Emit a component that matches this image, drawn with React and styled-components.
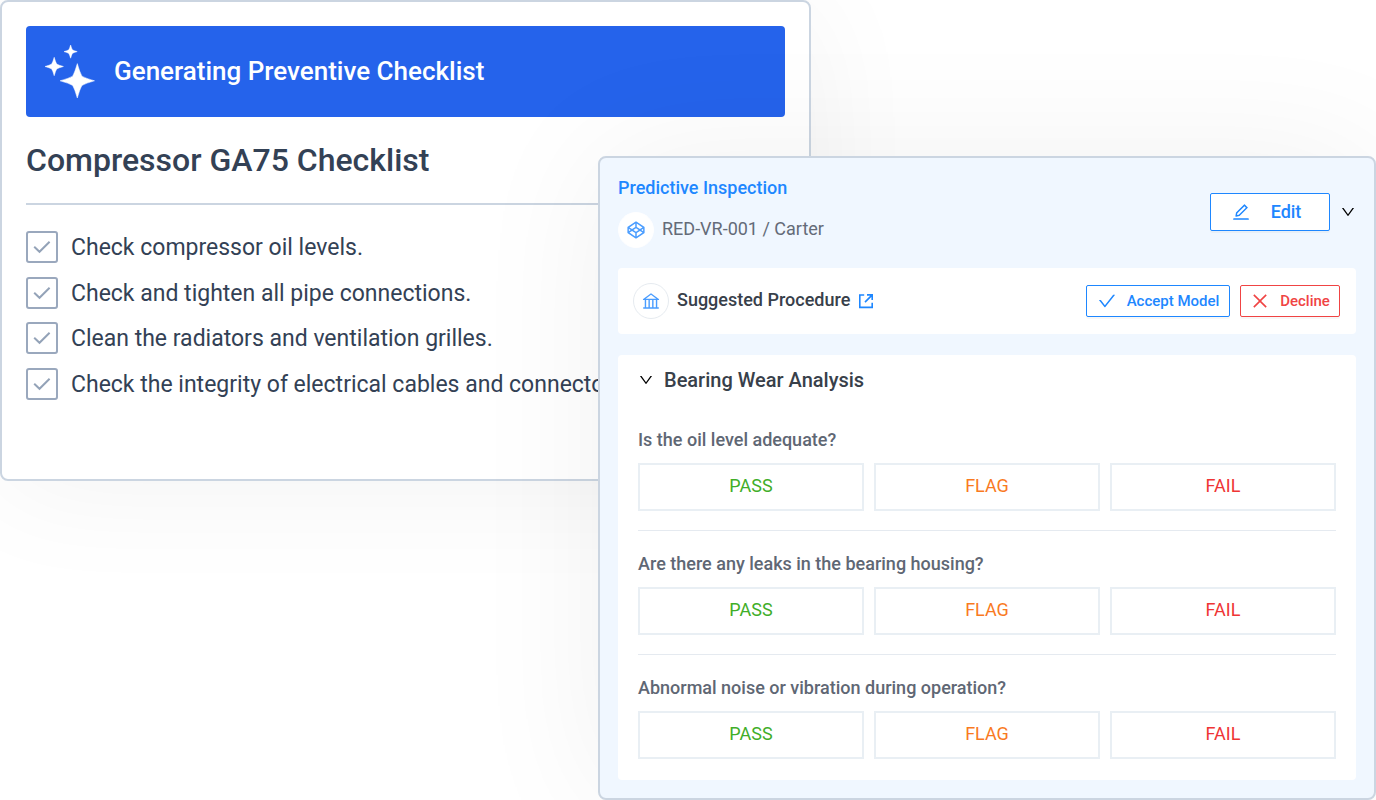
import React from "react";
import styled, { createGlobalStyle } from "styled-components";
import {
  AiOutlineBank,
  AiOutlineCheck,
  AiOutlineClose,
  AiOutlineCodepen,
  AiOutlineDown,
  AiOutlineEdit,
} from "react-icons/ai";

const GlobalStyle = createGlobalStyle`
  *, *::before, *::after { box-sizing: border-box; }
  body {
    margin: 0;
    background: #fff;
    font-family: Roboto, "Liberation Sans", sans-serif;
  }
  h1, h2, h3, p, ul { margin: 0; padding: 0; }
  button { font-family: inherit; cursor: pointer; }
`;

/* Two cards share the middle column, so the second overlaps the first. */
const Stage = styled.main`
  display: grid;
  grid-template-columns: minmax(0, 598fr) minmax(0, 213fr) minmax(0, 565fr);
  align-items: start;
  overflow: hidden;
`;

const Card = styled.section`
  grid-row: 1;
  border: 2px solid #cbd5e1;
  border-radius: 8px;
`;

const ChecklistCard = styled(Card)`
  grid-column: 1 / 3;
  padding: 24px 24px 79px;
  background: #fff;
  box-shadow: 0 8px 120px rgba(0, 0, 0, 0.05);
  overflow: hidden;
`;

const InspectionCard = styled(Card)`
  grid-column: 2 / 4;
  margin-top: 156px;
  padding: 18px;
  background: #f0f7ff;
  box-shadow: 0 0 140px rgba(0, 0, 0, 0.06);
  z-index: 1;
`;

const Banner = styled.div`
  display: flex;
  align-items: center;
  gap: 18px;
  padding: 18px;
  height: 91px;
  border-radius: 4px;
  background: #2563eb;
  color: #fff;
  font-size: 26px;
  font-weight: 500;
  line-height: 32px;
`;

const BannerText = styled.span`
  padding-bottom: 2px;
`;

const ChecklistTitle = styled.h1`
  padding: 23px 0;
  border-bottom: 2px solid #cbd5e1;
  color: #334155;
  font-size: 32px;
  font-weight: 500;
  line-height: 40px;
`;

const Checklist = styled.ul`
  display: grid;
  align-content: space-between;
  min-height: 169px;
  margin-top: 26px;
  list-style: none;
`;

const CheckItem = styled.label`
  display: flex;
  align-items: center;
  gap: 13px;
  color: #334155;
  font-size: 23px;
  line-height: 30px;
  white-space: nowrap;
`;

const CheckText = styled.span`
  padding-top: 2px;
`;

const Tick = styled.span`
  display: grid;
  place-items: center;
  flex: none;
  color: #94a3b8;

  > * { grid-area: 1 / 1; }
  svg { pointer-events: none; visibility: hidden; }
  input:checked + svg { visibility: visible; }
`;

const TickBox = styled.input`
  appearance: none;
  width: 32px;
  height: 32px;
  margin: 0;
  border: 2px solid #9aa8bd;
  border-radius: 3px;
  background: #fff;
`;

const Header = styled.header`
  display: flex;
  align-items: center;
  justify-content: space-between;
`;

const HeaderInfo = styled.div`
  display: grid;
  gap: 12px;
`;

const HeaderTitle = styled.h2`
  color: #1e87ff;
  font-size: 18px;
  font-weight: 500;
  line-height: 24px;
`;

const Row = styled.div`
  display: flex;
  align-items: center;
  gap: ${(p) => p.$gap}px;
`;

const Asset = styled.p`
  padding-bottom: 2px;
  color: #646b78;
  font-size: 18px;
  line-height: 24px;
`;

const RoundIcon = styled.span`
  display: grid;
  place-items: center;
  width: 36px;
  height: 36px;
  border: 1px solid ${(p) => p.$ring || "#fff"};
  border-radius: 50%;
  background: #fff;
  color: #4a9dff;
`;

const ActionButton = styled.button`
  display: flex;
  align-items: center;
  justify-content: center;
  gap: ${(p) => (p.$large ? 20 : 10)}px;
  width: ${(p) => p.$width}px;
  height: ${(p) => (p.$large ? 38 : 32)}px;
  padding: ${(p) => (p.$large ? "0 8px 0 0" : "0")};
  border: 1px solid currentColor;
  border-radius: 2px;
  background: #fff;
  box-shadow: 0 2px 0 rgba(0, 0, 0, 0.03);
  color: ${(p) => (p.$danger ? "#f04444" : "#1e87ff")};
  font-size: ${(p) => (p.$large ? 18 : 15)}px;
  font-weight: 500;
  line-height: 24px;
`;

const ToggleButton = styled.button`
  display: grid;
  place-items: center;
  padding: 0;
  border: 0;
  background: none;
  color: #000;
`;

const Panel = styled.div`
  border-radius: 4px;
  background: #fff;
`;

const ProcedurePanel = styled(Panel)`
  display: flex;
  align-items: center;
  justify-content: space-between;
  margin-top: 20px;
  padding: 15px 16px 15px 15px;
`;

const ProcedureTitle = styled.h3`
  padding-bottom: 2px;
  color: #38404a;
  font-size: 18px;
  font-weight: 500;
  line-height: 24px;
`;

const OpenLink = styled.a`
  display: grid;
  color: #1e87ff;
`;

const AnalysisPanel = styled(Panel)`
  margin-top: 21px;
  padding: 13px 20px 2px;
`;

const AnalysisTitle = styled.h3`
  color: #38404a;
  font-size: 20px;
  font-weight: 500;
  line-height: 24px;
`;

const Questions = styled.div`
  padding-top: 15px;
`;

const Question = styled.div`
  display: grid;
  gap: 10px;
  padding: 20px 0 19px;

  & + & { border-top: 1px solid #e5eaf0; }
`;

const QuestionText = styled.p`
  color: #5f6774;
  font-size: 18px;
  font-weight: 500;
  line-height: 26px;
`;

const Answers = styled.div`
  display: grid;
  grid-template-columns: repeat(3, minmax(0, 1fr));
  gap: 10px;
`;

const AnswerButton = styled.button`
  height: 48px;
  padding: 0 0 2px;
  border: 2px solid #e9eff4;
  background: #fff;
  color: ${(p) => p.$color};
  font-size: 18px;
  line-height: 24px;
`;

/* Path of a four-pointed star with centre (x, y) and radius r. */
const star = (x, y, r) => {
  const k = r * 0.27;
  const m = r * 0.14;
  const n = r * 0.5;
  return (
    `M${x} ${y - r}` +
    `Q${x + m} ${y - n} ${x + k} ${y - k}Q${x + n} ${y - m} ${x + r} ${y}` +
    `Q${x + n} ${y + m} ${x + k} ${y + k}Q${x + m} ${y + n} ${x} ${y + r}` +
    `Q${x - m} ${y + n} ${x - k} ${y + k}Q${x - n} ${y + m} ${x - r} ${y}` +
    `Q${x - n} ${y - m} ${x - k} ${y - k}Q${x - m} ${y - n} ${x} ${y - r}Z`
  );
};

const SparkleIcon = () => (
  <svg width="52" height="55" viewBox="0 0 52 55" fill="currentColor" aria-hidden="true">
    <path
      d={star(33.3, 36.8, 17.2) + star(10.2, 22.5, 9.2) + star(26.6, 7.6, 6.6)}
      stroke="currentColor"
      strokeWidth="0.5"
    />
  </svg>
);

const TickIcon = () => (
  <svg width="18" height="14" viewBox="0 0 18 14" fill="none" stroke="currentColor" strokeWidth="2" aria-hidden="true">
    <path d="M1.2 6.8 6.5 11.8 16.6 1.8" />
  </svg>
);

const ExternalIcon = () => (
  <svg width="16" height="16" viewBox="0 0 16 16" fill="none" stroke="currentColor" strokeWidth="1.6" aria-hidden="true">
    <path d="M6.2 2H1.8v12.4h12.4V9.8" />
    <path d="M9 1.9h5.2v5.2M14 2.1 7 9.1" />
  </svg>
);

const checks = [
  "Check compressor oil levels.",
  "Check and tighten all pipe connections.",
  "Clean the radiators and ventilation grilles.",
  "Check the integrity of electrical cables and connectors.",
];

const questions = [
  "Is the oil level adequate?",
  "Are there any leaks in the bearing housing?",
  "Abnormal noise or vibration during operation?",
];

const answers = [
  { label: "PASS", color: "#3fae29" },
  { label: "FLAG", color: "#f97a1f" },
  { label: "FAIL", color: "#ef3535" },
];

export default function App() {
  return (
    <>
      <GlobalStyle />
      <Stage>
        <ChecklistCard>
          <Banner>
            <SparkleIcon />
            <BannerText>Generating Preventive Checklist</BannerText>
          </Banner>
          <ChecklistTitle>Compressor GA75 Checklist</ChecklistTitle>
          <Checklist>
            {checks.map((text) => (
              <li key={text}>
                <CheckItem>
                  <Tick>
                    <TickBox type="checkbox" defaultChecked />
                    <TickIcon />
                  </Tick>
                  <CheckText>{text}</CheckText>
                </CheckItem>
              </li>
            ))}
          </Checklist>
        </ChecklistCard>

        <InspectionCard>
          <Header>
            <HeaderInfo>
              <HeaderTitle>Predictive Inspection</HeaderTitle>
              <Row $gap={8}>
                <RoundIcon>
                  <AiOutlineCodepen size={22} />
                </RoundIcon>
                <Asset>RED-VR-001 / Carter</Asset>
              </Row>
            </HeaderInfo>
            <Row $gap={10}>
              <ActionButton type="button" $large $width={120}>
                <AiOutlineEdit size={20} />
                Edit
              </ActionButton>
              <ToggleButton type="button" aria-label="Collapse inspection">
                <AiOutlineDown size={16} />
              </ToggleButton>
            </Row>
          </Header>

          <ProcedurePanel>
            <Row $gap={8}>
              <RoundIcon $ring="#e6ebf0">
                <AiOutlineBank size={20} />
              </RoundIcon>
              <ProcedureTitle>Suggested Procedure</ProcedureTitle>
              <OpenLink href="#procedure" aria-label="Open procedure">
                <ExternalIcon />
              </OpenLink>
            </Row>
            <Row $gap={10}>
              <ActionButton type="button" $width={144}>
                <AiOutlineCheck size={20} />
                Accept Model
              </ActionButton>
              <ActionButton type="button" $danger $width={100}>
                <AiOutlineClose size={20} />
                Decline
              </ActionButton>
            </Row>
          </ProcedurePanel>

          <AnalysisPanel>
            <Row $gap={10}>
              <ToggleButton type="button" aria-label="Collapse analysis">
                <AiOutlineDown size={16} />
              </ToggleButton>
              <AnalysisTitle>Bearing Wear Analysis</AnalysisTitle>
            </Row>
            <Questions>
              {questions.map((text) => (
                <Question key={text}>
                  <QuestionText>{text}</QuestionText>
                  <Answers role="group" aria-label={text}>
                    {answers.map(({ label, color }) => (
                      <AnswerButton key={label} type="button" $color={color}>
                        {label}
                      </AnswerButton>
                    ))}
                  </Answers>
                </Question>
              ))}
            </Questions>
          </AnalysisPanel>
        </InspectionCard>
      </Stage>
    </>
  );
}
